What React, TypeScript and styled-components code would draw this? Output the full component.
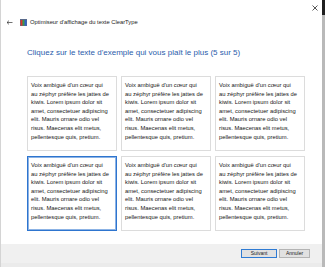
import styled, { createGlobalStyle } from "styled-components";

const GlobalStyle = createGlobalStyle`
  html, body {
    margin: 0;
    padding: 0;
    width: 325px;
    height: 267px;
    overflow: hidden;
    background: #ffffff;
  }
`;

const sampleLines = [
  "Voix ambiguë d'un cœur qui",
  "au zéphyr préfère les jattes de",
  "kiwis. Lorem ipsum dolor sit",
  "amet, consectetuer adipiscing",
  "elit. Mauris ornare odio vel",
  "risus. Maecenas elit metus,",
  "pellentesque quis, pretium.",
];

const Screen = styled.div`
  display: flex;
  width: 325px;
  height: 267px;
  font-family: "Liberation Sans", Arial, sans-serif;
`;

const Window = styled.div`
  flex: 1;
  display: flex;
  flex-direction: column;
  background: #ffffff;
  border-left: 1px solid #d4d4d4;
`;

const Edge = styled.div`
  width: 3px;
  display: flex;
  flex-direction: column;
  background: #b9b9b9;

  &::before {
    content: "";
    display: block;
    height: 15px;
    background: #1f1f1f;
  }
`;

const TitleBar = styled.div`
  height: 15px;
  display: flex;
  justify-content: flex-end;
  align-items: center;
  padding-right: 4px;
`;

const Header = styled.div`
  height: 14px;
  display: flex;
  align-items: center;
  padding-left: 5px;
`;

const HeaderTitle = styled.span`
  margin-left: 3px;
  font-size: 5.8px;
  color: #1a1a1a;
  white-space: nowrap;
`;

const Heading = styled.h1`
  margin: 19px 0 0 26px;
  height: 10px;
  line-height: 10px;
  font-size: 8px;
  font-weight: normal;
  color: #2a5cab;
  white-space: nowrap;
`;

const Grid = styled.div`
  margin: 18px 0 0 26px;
  display: grid;
  grid-template-columns: repeat(3, 90px);
  grid-auto-rows: 75px;
  column-gap: 4px;
  row-gap: 5px;
`;

const Card = styled.div<{ $selected?: boolean }>`
  box-sizing: border-box;
  padding: 4px 3px 0 3px;
  background: #ffffff;
  border: 1px solid ${(p) => (p.$selected ? "#2e75cf" : "#dcdcdc")};
  box-shadow: ${(p) =>
    p.$selected ? "inset 0 0 0 1px rgba(46, 117, 207, 0.55)" : "none"};
  font-size: 5.8px;
  line-height: 8.6px;
  color: #161616;
`;

const Line = styled.span`
  display: block;
  white-space: nowrap;
`;

const Spacer = styled.div`
  flex: 1;
`;

const Footer = styled.div`
  height: 19px;
  display: flex;
  justify-content: flex-end;
  align-items: center;
  gap: 2px;
  padding-right: 12px;
  background: #f0f0f0;
`;

const BottomStrip = styled.div`
  height: 4px;
  background: #ebebeb;
`;

const Button = styled.button<{ $primary?: boolean; $w: number }>`
  box-sizing: border-box;
  width: ${(p) => p.$w}px;
  height: 9px;
  padding: 0;
  margin: 0;
  font-family: "Liberation Sans", Arial, sans-serif;
  font-size: 5px;
  line-height: 7px;
  color: #1a1a1a;
  background: #e1e1e1;
  border: 1px solid ${(p) => (p.$primary ? "#2f7bd3" : "#b4b4b4")};
`;

function CloseIcon() {
  return (
    <svg width="6" height="6" viewBox="0 0 6 6">
      <path d="M0.5 0.5 L5.5 5.5 M5.5 0.5 L0.5 5.5" stroke="#444" strokeWidth="0.9" />
    </svg>
  );
}

function BackArrow() {
  return (
    <svg width="7" height="5" viewBox="0 0 7 5">
      <path d="M6.5 2.5 H1 M3 0.6 L1 2.5 L3 4.4" stroke="#333" strokeWidth="0.7" fill="none" />
    </svg>
  );
}

function ClearTypeIcon() {
  return (
    <svg width="7" height="7" viewBox="0 0 7 7" style={{ marginLeft: 7 }}>
      <rect x="0" y="0" width="7" height="7" fill="#5a6b8c" />
      <rect x="0.6" y="1" width="2" height="5.6" fill="#d8362c" />
      <rect x="2.6" y="1" width="2" height="5.6" fill="#3d9a46" />
      <rect x="4.6" y="1" width="1.9" height="5.6" fill="#2e62c9" />
    </svg>
  );
}

export default function App() {
  const cards = [0, 1, 2, 3, 4, 5];
  return (
    <Screen>
      <GlobalStyle />
      <Window>
        <TitleBar>
          <CloseIcon />
        </TitleBar>
        <Header>
          <BackArrow />
          <ClearTypeIcon />
          <HeaderTitle>Optimiseur d'affichage du texte ClearType</HeaderTitle>
        </Header>
        <Heading>Cliquez sur le texte d'exemple qui vous plaît le plus (5 sur 5)</Heading>
        <Grid>
          {cards.map((i) => (
            <Card key={i} $selected={i === 3}>
              {sampleLines.map((line) => (
                <Line key={line}>{line}</Line>
              ))}
            </Card>
          ))}
        </Grid>
        <Spacer />
        <Footer>
          <Button $primary $w={36}>Suivant</Button>
          <Button $w={31}>Annuler</Button>
        </Footer>
        <BottomStrip />
      </Window>
      <Edge />
    </Screen>
  );
}
